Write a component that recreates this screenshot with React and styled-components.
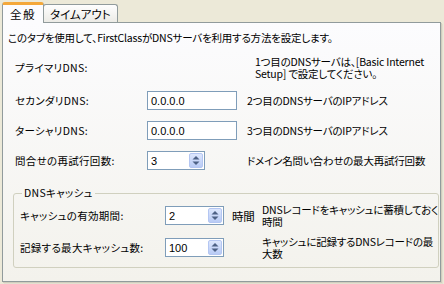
import React from 'react';
import styled, { createGlobalStyle } from 'styled-components';

const GlobalStyle = createGlobalStyle`
  html, body {
    margin: 0;
    padding: 0;
    background: #ece9d8;
  }
  body {
    font-family: "Noto Sans CJK JP", "Liberation Sans", sans-serif;
    font-size: 10.5px;
    letter-spacing: -0.2px;
    font-feature-settings: "palt";
    color: #000;
  }
`;

const Window = styled.div`
  width: 444px;
  height: 284px;
  box-sizing: border-box;
  padding: 2px 0 0 2px;
  background: #ece9d8;
`;

const TabStrip = styled.div`
  display: flex;
  align-items: flex-end;
  height: 20px;
`;

const Tab = styled.div`
  box-sizing: border-box;
  height: ${p => (p.active ? '21px' : '18px')};
  margin-bottom: ${p => (p.active ? '-1px' : '0')};
  padding: 0 ${p => (p.active ? '7px' : '6px')};
  display: flex;
  align-items: center;
  position: relative;
  z-index: ${p => (p.active ? 2 : 1)};
  border: 1px solid #919b9c;
  border-bottom: none;
  border-top: ${p => (p.active ? '3px solid #f4a83a' : '1px solid #919b9c')};
  border-radius: 3px 3px 0 0;
  background: ${p => (p.active ? '#fcfcfe' : 'linear-gradient(#fefefe, #ecebe6)')};
  margin-left: ${p => (p.active ? '0' : '-1px')};
  line-height: 14px;
  font-size: 11.5px;
  letter-spacing: ${p => (p.active ? '1.5px' : '0')};
  white-space: nowrap;
`;

const Panel = styled.div`
  box-sizing: border-box;
  width: 439px;
  height: 260px;
  border: 1px solid #919b9c;
  box-shadow: 1px 1px 0 #d0cdbd, 2px 2px 0 #e3e0d0;
  background: linear-gradient(#fcfcfe, #f3f2ec);
  padding: 8px 3px 0 5px;
`;

const Intro = styled.div`
  line-height: 14px;
  white-space: nowrap;
`;

const Form = styled.div`
  display: grid;
  grid-template-columns: 132px 100px 1fr;
  grid-template-rows: 25px 19px 19px 19px;
  row-gap: 11px;
  margin: 10px 0 0 7px;
  align-items: center;
`;

const Label = styled.div`
  line-height: 14px;
  white-space: nowrap;
  letter-spacing: 0.3px;
`;

const Note = styled.div`
  line-height: 11.5px;
  white-space: nowrap;
  padding-left: ${p => p.indent || 0}px;
`;

const TextBox = styled.div`
  box-sizing: border-box;
  width: ${p => p.width || 90}px;
  height: 19px;
  border: 1px solid #7f9db9;
  background: #fff;
  display: flex;
  align-items: center;
  padding-left: 3px;
  font-family: "Liberation Sans", sans-serif;
  font-size: 11px;
  letter-spacing: 0;
`;

const SpinBox = styled(TextBox)`
  justify-content: space-between;
  padding-right: 1px;
`;

const SpinButton = styled.div`
  box-sizing: border-box;
  width: 14px;
  height: 15px;
  border-radius: 2px;
  border: 1px solid #b4c6f2;
  background: linear-gradient(#dce6fd, #b9cbf5);
  display: flex;
  align-items: center;
  justify-content: center;
`;

const Group = styled.fieldset`
  margin: 16px 1px 0 5px;
  padding: 6px 0 10px 6px;
  border: 1px solid #d0d0bf;
  border-radius: 3px;
`;

const Legend = styled.legend`
  padding: 0 2px;
  margin-left: 2px;
  line-height: 14px;
  letter-spacing: 0.3px;
`;

const GroupGrid = styled.div`
  display: grid;
  grid-template-columns: 145px 67px 30px 1fr;
  grid-template-rows: 19px 19px;
  row-gap: 13px;
  align-items: center;
`;

const Unit = styled.div`
  line-height: 14px;
  font-size: 11.5px;
`;

function Spinner({ value, width }) {
  return (
    <SpinBox width={width}>
      <span>{value}</span>
      <SpinButton>
        <svg width="8" height="11" viewBox="0 0 8 11">
          <path d="M4 1 L7.5 4.5 H0.5 Z" fill="#4d6185" />
          <path d="M4 10 L7.5 6.5 H0.5 Z" fill="#4d6185" />
        </svg>
      </SpinButton>
    </SpinBox>
  );
}

export default function App() {
  return (
    <Window>
      <GlobalStyle />
      <TabStrip>
        <Tab active>全般</Tab>
        <Tab>タイムアウト</Tab>
      </TabStrip>
      <Panel>
        <Intro>このタブを使用して、FirstClassがDNSサーバを利用する方法を設定します。</Intro>
        <Form>
          <Label>プライマリDNS:</Label>
          <div />
          <Note indent={8}>
            1つ目のDNSサーバは、[Basic Internet
            <br />
            Setup] で設定してください。
          </Note>

          <Label>セカンダリDNS:</Label>
          <TextBox>0.0.0.0</TextBox>
          <Note>2つ目のDNSサーバのIPアドレス</Note>

          <Label>ターシャリDNS:</Label>
          <TextBox>0.0.0.0</TextBox>
          <Note>3つ目のDNSサーバのIPアドレス</Note>

          <Label>問合せの再試行回数:</Label>
          <Spinner value="3" width={58} />
          <Note>ドメイン名問い合わせの最大再試行回数</Note>
        </Form>
        <Group>
          <Legend>DNSキャッシュ</Legend>
          <GroupGrid>
            <Label>キャッシュの有効期間:</Label>
            <Spinner value="2" width={59} />
            <Unit>時間</Unit>
            <Note>
              DNSレコードをキャッシュに蓄積しておく
              <br />
              時間
            </Note>

            <Label>記録する最大キャッシュ数:</Label>
            <Spinner value="100" width={59} />
            <div />
            <Note>
              キャッシュに記録するDNSレコードの最
              <br />
              大数
            </Note>
          </GroupGrid>
        </Group>
      </Panel>
    </Window>
  );
}
